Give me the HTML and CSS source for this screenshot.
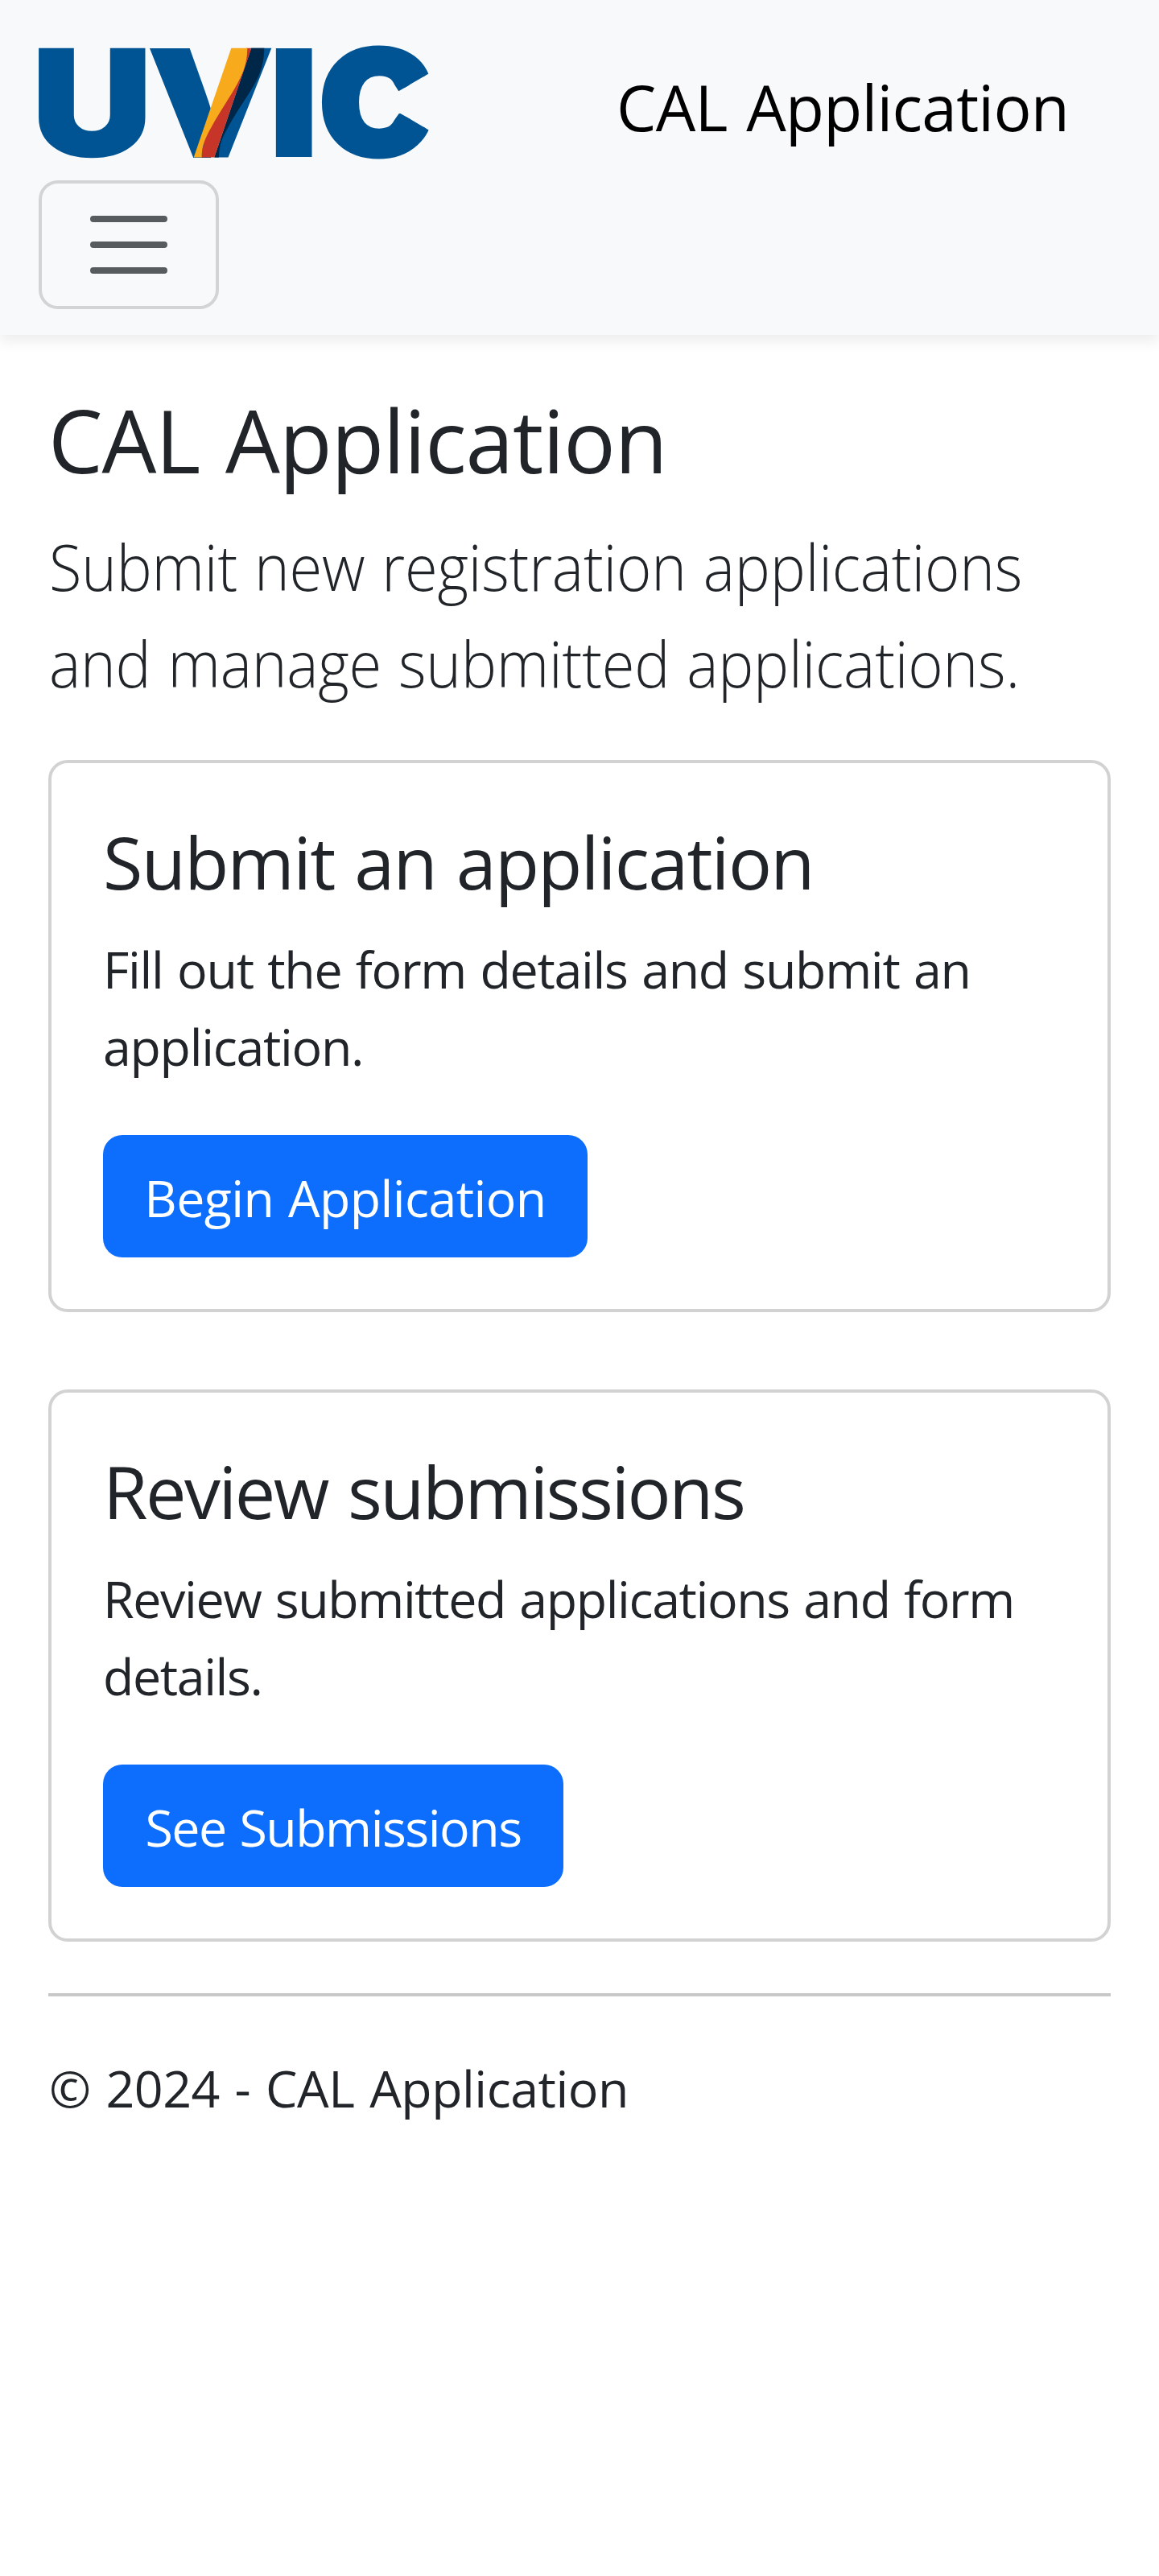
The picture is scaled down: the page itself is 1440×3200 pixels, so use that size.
FILE: index.html
```html
<!DOCTYPE html>
<html lang="en">
<head>
<meta charset="utf-8">
<title>CAL Application</title>
<link rel="stylesheet" href="styles.css">
</head>
<body>
<header class="navbar">
  <div class="navbar-top">
    <svg class="logo" viewBox="48 48 488 152" role="img" aria-label="UVIC">
      <defs>
        <clipPath id="left-arm"><rect x="180" y="50" width="82" height="146"/></clipPath>
        <clipPath id="opening"><path clip-rule="evenodd" d="M395 50H545V200H395ZM545 84.2L495.3 113.3L490 105L481 99L470 97V157L481 155.5L490 149L496.3 140.3L545 168.7Z"/></clipPath>
      </defs>
      <text class="mark mark-bold" transform="translate(40 193) scale(.515 .453)">U</text>
      <g clip-path="url(#left-arm)"><text class="mark" transform="translate(181 195.5) scale(.556 .4667)">V</text></g>
      <text class="mark" transform="translate(332.3 194.5) scale(.566 .4635)">I</text>
      <g clip-path="url(#opening)"><text class="mark mark-round" transform="translate(397.3 191.5) scale(.474 .447)">C</text></g>
      <!-- ribbon bands, back to front -->
      <path fill="#005493" d="M312.3 59.7H337.3L283.5 195.5H266.3Z"/>
      <path fill="#002748" d="M312.3 59.7H328.3C328.3 97 309 113 285 155C276 171 272 180 272 195.5H266.3Z"/>
      <path fill="#c63527" d="M306 59.7H312.3L266.3 195.5H250L258 150Z"/>
      <path fill="#f7aa1c" d="M287.3 59.7H307.3C307.3 94 288 113 263.3 156.7C254 173 250.7 182 250.7 195.5H240.7Z"/>
    </svg>
    <a class="brand">CAL Application</a>
  </div>
  <button class="toggler" aria-label="Toggle navigation">
    <svg viewBox="0 0 30 30"><path stroke="rgba(33,37,41,.75)" stroke-linecap="round" stroke-miterlimit="10" stroke-width="2" d="M4 7h22M4 15h22M4 23h22"/></svg>
  </button>
</header>
<main class="container">
  <h1 class="title">CAL Application</h1>
  <p class="lead">Submit new registration applications<br>and manage submitted applications.</p>
  <div class="cards">
    <section class="card">
      <h3 class="card-title">Submit an application</h3>
      <p class="card-text">Fill out the form details and submit an<br>application.</p>
      <a class="btn btn-begin">Begin Application</a>
    </section>
    <section class="card">
      <h3 class="card-title card-title-tight">Review submissions</h3>
      <p class="card-text card-text-tight">Review submitted applications and form<br>details.</p>
      <a class="btn btn-see">See Submissions</a>
    </section>
  </div>
  <hr class="rule">
  <footer class="footer">© 2024 - CAL Application</footer>
</main>
</body>
</html>
```
FILE: styles.css
```css
* { box-sizing: border-box; }

body {
  margin: 0;
  background: #fff;
  color: #212529;
  font-family: "Open Sans", "Noto Sans", sans-serif;
  font-size: 62.7px;
  line-height: 96px;
}

h1, h3, p { margin: 0; font-weight: 400; white-space: nowrap; }

.navbar {
  height: 416px;
  padding: 48px;
  background: #f8f9fb;
  box-shadow: 0 8px 16px rgba(0, 0, 0, .075);
}
.navbar-top { display: flex; height: 176px; }
.logo { width: 488px; height: 152px; flex: none; }
.mark { font-family: Inter, sans-serif; font-weight: 900; font-size: 400px; fill: #005493; }
.mark-bold { stroke: #005493; stroke-width: 6px; }
.mark-round { stroke: #005493; stroke-width: 16px; }

.brand {
  margin-left: 230px;
  padding-top: 25px;
  color: #000;
  font-size: 78.4px;
  line-height: 120px;
  letter-spacing: -.75px;
  word-spacing: 4px;
  white-space: nowrap;
}

.toggler {
  display: flex;
  align-items: center;
  justify-content: center;
  width: 224px;
  height: 160px;
  padding: 0;
  border: 4px solid rgba(0, 0, 0, .15);
  border-radius: 24px;
  background: none;
}
.toggler svg { width: 120px; height: 120px; }

.container { padding: 60px 60px 0; }

.title {
  height: 131.5px;
  padding-top: 5px;
  font-size: 107.4px;
  line-height: 131.5px;
  letter-spacing: -1.1px;
  word-spacing: 5px;
}
.lead {
  height: 240px;
  margin-top: 32px;
  padding: 4px 0 0 1px;
  font-size: 78.4px;
  font-weight: 300;
  line-height: 120px;
  letter-spacing: -.2px;
  word-spacing: 2px;
  transform: scaleX(.945);
  transform-origin: left;
}

.cards { display: flex; flex-direction: column; gap: 96px; margin-top: 64px; }
.card {
  height: 686px;
  padding: 67px 64px 64px;
  border: 4px solid rgba(0, 0, 0, .175);
  border-radius: 24px;
}
.card-title { font-size: 90px; line-height: 110px; letter-spacing: -1.7px; word-spacing: 3px; }
.card-title-tight { letter-spacing: -2.5px; word-spacing: 4px; }
.card-text { margin-top: 31px; letter-spacing: -1.3px; word-spacing: 2.5px; }

.btn {
  display: flex;
  justify-content: center;
  width: 602px;
  height: 152px;
  margin-top: 62px;
  padding-top: 30px;
  border-radius: 24px;
  background: #0d6efd;
  color: #fff;
  white-space: nowrap;
}
.card-text-tight { letter-spacing: -1.4px; }
.btn-begin { letter-spacing: -.6px; word-spacing: 2px; }
.btn-see { width: 572px; letter-spacing: -1.5px; word-spacing: 2px; }

.rule { height: 4px; margin: 64px 0; border: 0; background: #c8c8c9; }
.footer { padding: 2px 0 0 1px; letter-spacing: -.5px; word-spacing: 3px; }
```
